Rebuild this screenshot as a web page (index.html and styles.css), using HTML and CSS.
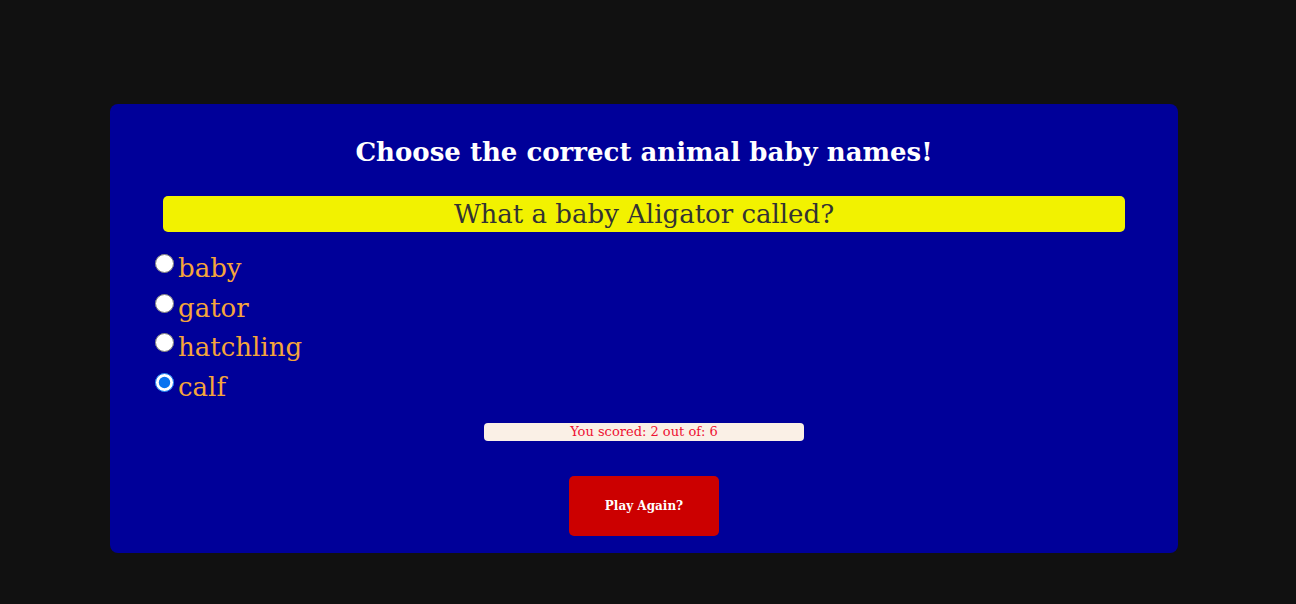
FILE: index.html
```html
<!DOCTYPE html>
<html>
<head>
<meta charset="utf-8">
<link rel="stylesheet" href="styles.css">
</head>
<body>
<main class="card">
  <h1 class="title">Choose the correct animal baby names!</h1>
  <div class="question">What a baby Aligator called?</div>
  <div class="options">
    <label class="option"><input type="radio" name="a" class="radio"><span>baby</span></label>
    <label class="option"><input type="radio" name="a" class="radio"><span>gator</span></label>
    <label class="option"><input type="radio" name="a" class="radio"><span>hatchling</span></label>
    <label class="option"><input type="radio" name="a" class="radio" checked><span>calf</span></label>
  </div>
  <div class="score">You scored: 2 out of: 6</div>
  <button class="again">Play Again?</button>
</main>
</body>
</html>
```
FILE: styles.css
```css
html, body {
  margin: 0;
  padding: 0;
  background: #111111;
  height: 100%;
}
body {
  font-family: "DejaVu Serif", serif;
}
.card {
  box-sizing: border-box;
  width: 1068px;
  height: 449px;
  margin: 104px 0 0 110px;
  background: #000099;
  border-radius: 8px;
  padding: 30px 45px 0;
  display: flex;
  flex-direction: column;
}
.title {
  margin: 0;
  color: #ffffff;
  font-size: 26px;
  line-height: 36px;
  font-weight: bold;
  text-align: center;
}
.question {
  margin: 26px 8px 0;
  height: 36px;
  line-height: 36px;
  background: #f2f200;
  border-radius: 5px;
  color: #333333;
  font-size: 26px;
  text-align: center;
}
.options {
  margin-top: 22px;
  display: flex;
  flex-direction: column;
}
.option {
  display: flex;
  align-items: flex-start;
  height: 39.5px;
  color: #f5a53a;
  font-size: 26px;
  line-height: 29px;
}
.radio {
  width: 19px;
  height: 19px;
  margin: 0 4px 0 0;
  accent-color: #0a74f0;
}
.score {
  width: 320px;
  height: 18px;
  margin: 11px auto 0;
  background: #faf0e6;
  border-radius: 4px;
  color: #ee1133;
  font-size: 13px;
  line-height: 18px;
  text-align: center;
}
.again {
  width: 150px;
  height: 60px;
  margin: 35px auto 0;
  background: #cc0000;
  border: none;
  border-radius: 5px;
  color: #ffffff;
  font-family: "DejaVu Serif", serif;
  font-weight: bold;
  font-size: 12px;
}
```
